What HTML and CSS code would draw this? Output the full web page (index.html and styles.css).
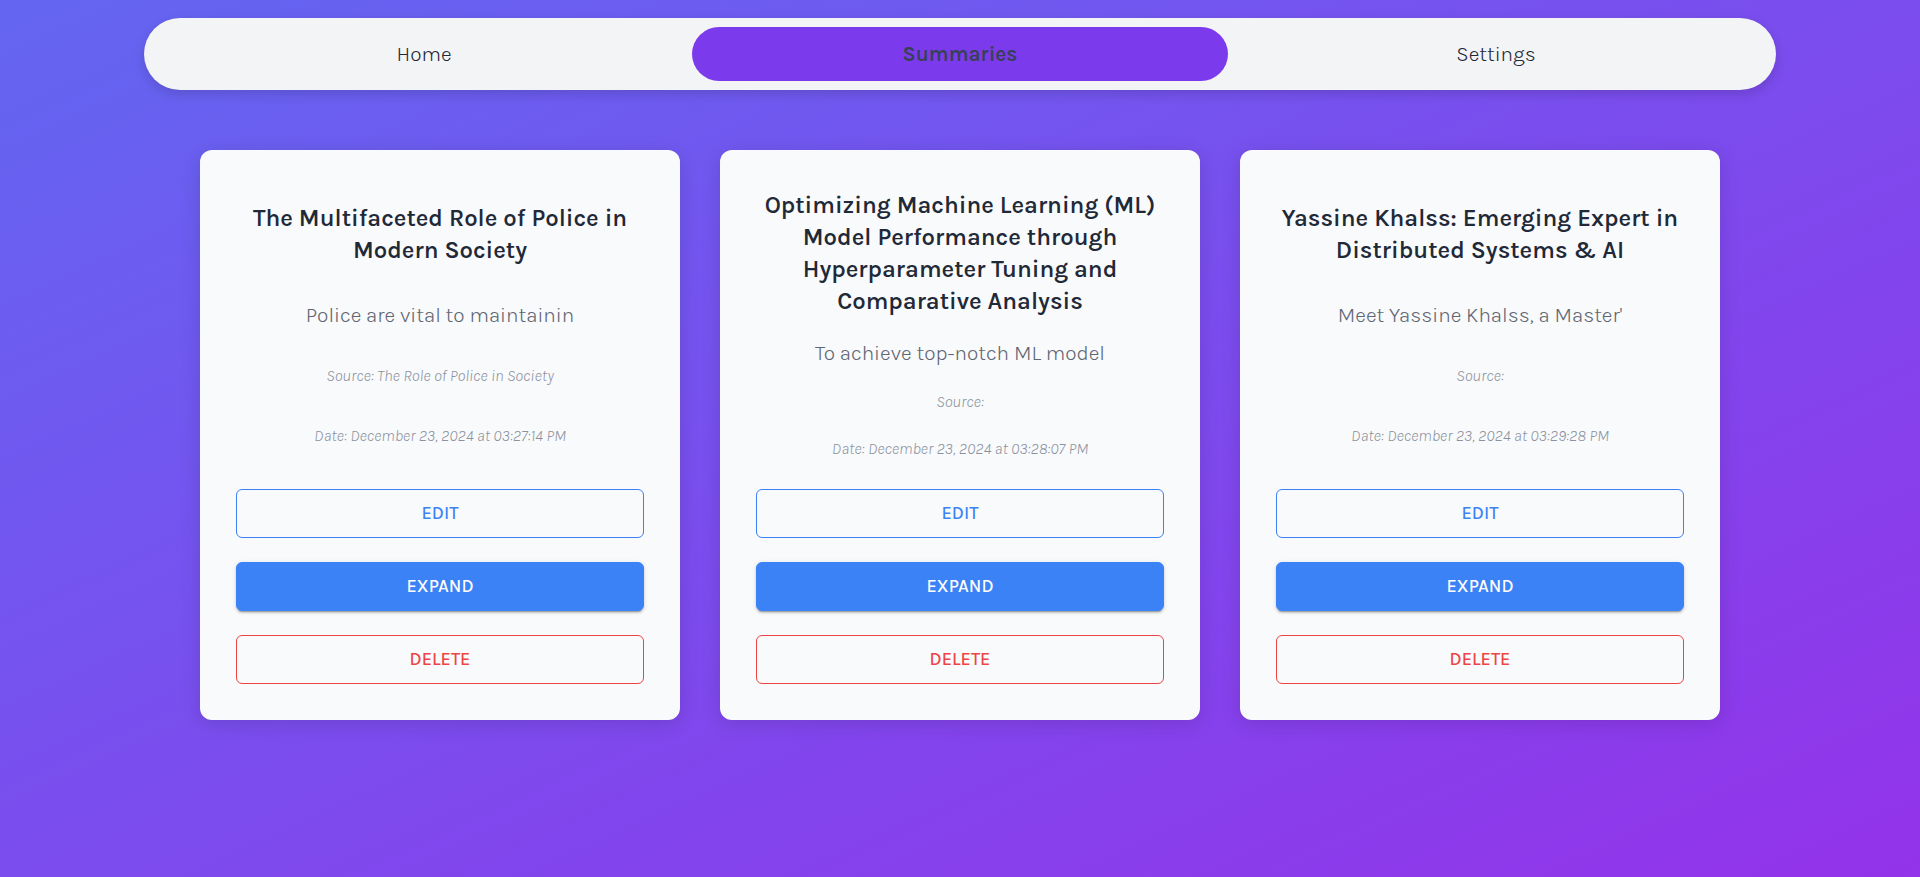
FILE: index.html
```html
<!DOCTYPE html>
<html lang="en">
<head>
<meta charset="utf-8">
<meta name="viewport" content="width=device-width, initial-scale=1">
<title>Summaries</title>
<link rel="stylesheet" href="styles.css">
</head>
<body>
<nav class="navbar" aria-label="Main">
  <a class="nav-link" href="#home">Home</a>
  <a class="nav-link active" href="#summaries" aria-current="page">Summaries</a>
  <a class="nav-link" href="#settings">Settings</a>
</nav>
<main class="summaries">
  <article class="card">
    <div class="content">
      <h2 class="title">The Multifaceted Role of Police in Modern Society</h2>
      <p class="preview">Police are vital to maintainin</p>
      <p class="meta source">Source: The Role of Police in Society</p>
      <p class="meta date">Date: December 23, 2024 at 03:27:14 PM</p>
    </div>
    <div class="actions">
      <button class="button edit" type="button">EDIT</button>
      <button class="button expand" type="button">EXPAND</button>
      <button class="button delete" type="button">DELETE</button>
    </div>
  </article>
  <article class="card">
    <div class="content">
      <h2 class="title">Optimizing Machine Learning (ML) Model Performance through Hyperparameter Tuning and Comparative Analysis</h2>
      <p class="preview">To achieve top-notch ML model</p>
      <p class="meta source">Source:</p>
      <p class="meta date">Date: December 23, 2024 at 03:28:07 PM</p>
    </div>
    <div class="actions">
      <button class="button edit" type="button">EDIT</button>
      <button class="button expand" type="button">EXPAND</button>
      <button class="button delete" type="button">DELETE</button>
    </div>
  </article>
  <article class="card">
    <div class="content">
      <h2 class="title">Yassine Khalss: Emerging Expert in Distributed Systems &amp; AI</h2>
      <p class="preview">Meet Yassine Khalss, a Master'</p>
      <p class="meta source">Source:</p>
      <p class="meta date">Date: December 23, 2024 at 03:29:28 PM</p>
    </div>
    <div class="actions">
      <button class="button edit" type="button">EDIT</button>
      <button class="button expand" type="button">EXPAND</button>
      <button class="button delete" type="button">DELETE</button>
    </div>
  </article>
</main>
</body>
</html>
```
FILE: styles.css
```css
* {
  box-sizing: border-box;
}

body {
  margin: 0;
  min-height: 100vh;
  padding: 18px 0 60px;
  font-family: Karla, Inter, "Liberation Sans", sans-serif;
  background: linear-gradient(to bottom right, #6366f1, #9333ea);
}

.navbar {
  display: flex;
  width: 85%;
  margin: 0 auto 60px;
  padding: 9px 12px;
  border-radius: 36px;
  background: #f3f4f6;
  box-shadow: 0 4px 12px rgba(0, 0, 0, 0.15);
}

.nav-link {
  flex: 1;
  border-radius: 27px;
  font-size: 21px;
  font-weight: 300;
  line-height: 54px;
  text-align: center;
  text-decoration: none;
  color: #1f2937;
}

.nav-link.active {
  background: #7c3aed;
  font-weight: 600;
  color: #374151;
}

.summaries {
  display: grid;
  grid-template-columns: repeat(auto-fit, minmax(380px, 480px));
  justify-content: center;
  gap: 40px;
  padding: 0 40px;
}

.card {
  display: flex;
  flex-direction: column;
  min-height: 570px;
  padding: 36px;
  border-radius: 12px;
  background: #f9fafb;
  box-shadow: 0 4px 20px rgba(0, 0, 0, 0.12);
  text-align: center;
}

.content {
  display: flex;
  flex: 1;
  flex-direction: column;
  justify-content: space-evenly;
}

.title {
  margin: 0 0 18px;
  font-size: 24px;
  font-weight: 600;
  line-height: 32px;
  color: #1f2937;
}

.preview {
  margin: 0 0 20px;
  font-size: 21px;
  font-weight: 300;
  line-height: 30px;
  color: #5f6673;
}

.meta {
  margin: 0;
  font-size: 16px;
  font-style: italic;
  font-weight: 300;
  line-height: 22px;
  color: #8b929f;
}

.source {
  margin-bottom: 22px;
}

.date {
  margin-bottom: 26px;
}

.actions {
  display: flex;
  flex-direction: column;
  gap: 24px;
}

.button {
  height: 49px;
  padding: 0 12px 2px;
  border: 1px solid;
  border-radius: 6px;
  background: transparent;
  font-family: Karla, "Noto Sans", sans-serif;
  font-size: 18px;
  font-weight: 500;
  cursor: pointer;
}

.edit {
  color: #3b82f6;
}

.expand {
  border-color: #3b82f6;
  background: #3b82f6;
  box-shadow: 0 3px 1px -2px rgba(0, 0, 0, 0.2), 0 2px 2px rgba(0, 0, 0, 0.14), 0 1px 5px rgba(0, 0, 0, 0.12);
  color: #ffffff;
}

.delete {
  color: #ef4444;
}
```
